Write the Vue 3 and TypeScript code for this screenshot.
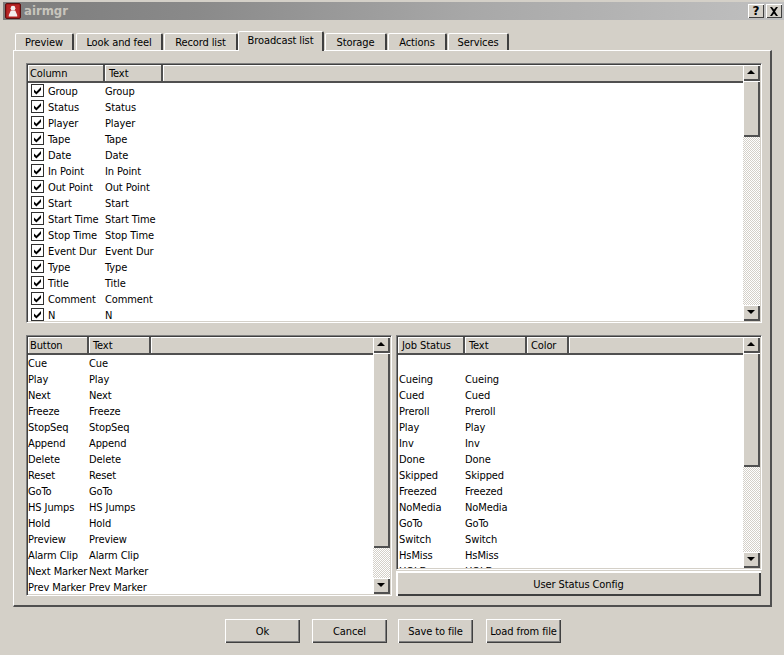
<script setup lang="ts">
const tabs = ['Preview', 'Look and feel', 'Record list', 'Broadcast list', 'Storage', 'Actions', 'Services']
const tabWidths = [59, 87, 74, 86, 62, 59, 61]
const columns = ['Group', 'Status', 'Player', 'Tape', 'Date', 'In Point', 'Out Point', 'Start', 'Start Time', 'Stop Time', 'Event Dur', 'Type', 'Title', 'Comment', 'N']
const buttons = ['Cue', 'Play', 'Next', 'Freeze', 'StopSeq', 'Append', 'Delete', 'Reset', 'GoTo', 'HS Jumps', 'Hold', 'Preview', 'Alarm Clip', 'Next Marker', 'Prev Marker']
const statuses = ['', 'Cueing', 'Cued', 'Preroll', 'Play', 'Inv', 'Done', 'Skipped', 'Freezed', 'NoMedia', 'GoTo', 'Switch', 'HsMiss', 'HOLD']
const actions = ['Ok', 'Cancel', 'Save to file', 'Load from file']
</script>

<template>
  <div class="window">
    <header class="titlebar">
      <svg class="app-icon" viewBox="0 0 16 16" width="16" height="16">
        <rect x="0.5" y="0.5" width="15" height="15" rx="1.5" fill="#a81c1c" stroke="#5c1010" />
        <rect x="2" y="2" width="12" height="12" fill="#b82626" />
        <circle cx="8" cy="5.2" r="2.4" fill="#f4eeee" />
        <path d="M5.8 7.5h4.4l2 4.5v1.5H3.8V12z" fill="#f4eeee" />
      </svg>
      <span class="title">airmgr</span>
      <span class="spacer"></span>
      <button class="cap help">?</button>
      <button class="cap close">
        <svg viewBox="0 0 10 9" width="10" height="9"><path d="M1 0h2l2 2.5L7 0h2L6 4.5 9 9H7L5 6.5 3 9H1l3-4.5z" fill="#000" /></svg>
      </button>
    </header>

    <nav class="tabs">
      <div
        v-for="(tab, i) in tabs"
        :key="tab"
        class="tab"
        :class="{ active: i === 3 }"
        :style="{ width: tabWidths[i] + 'px' }"
      >{{ tab }}</div>
    </nav>

    <main class="panel">
      <section class="list top-list">
        <div class="list-main">
          <div class="head">
            <div class="hcell w76">Column</div>
            <div class="hcell w58">Text</div>
            <div class="hcell fill"></div>
          </div>
          <div v-for="c in columns" :key="c" class="row check-row">
            <span class="check">
              <svg viewBox="0 0 9 9" width="9" height="9"><path d="M1 3.4l2.4 2.4L8 1v3L3.4 8.6 1 6.2z" fill="#000" /></svg>
            </span>
            <span>{{ c }}</span>
            <span>{{ c }}</span>
          </div>
        </div>
        <div class="scroll">
          <div class="sbtn"><i class="up"></i></div>
          <div class="thumb t56"></div>
          <div class="track"></div>
          <div class="sbtn"><i class="down"></i></div>
        </div>
      </section>

      <div class="lower">
        <section class="list left-list">
          <div class="list-main">
            <div class="head">
              <div class="hcell w61">Button</div>
              <div class="hcell w62">Text</div>
              <div class="hcell fill"></div>
            </div>
            <div v-for="b in buttons" :key="b" class="row plain-left">
              <span>{{ b }}</span>
              <span>{{ b }}</span>
            </div>
          </div>
          <div class="scroll">
            <div class="sbtn"><i class="up"></i></div>
            <div class="thumb t195"></div>
            <div class="track"></div>
            <div class="sbtn"><i class="down"></i></div>
          </div>
        </section>

        <div class="right-col">
          <section class="list right-list">
            <div class="list-main">
              <div class="head">
                <div class="hcell w67">Job Status</div>
                <div class="hcell w62">Text</div>
                <div class="hcell w42">Color</div>
                <div class="hcell fill"></div>
              </div>
              <div v-for="(s, i) in statuses" :key="i" class="row plain-right">
                <span>{{ s }}</span>
                <span>{{ s }}</span>
              </div>
            </div>
            <div class="scroll">
              <div class="sbtn"><i class="up"></i></div>
              <div class="thumb t114"></div>
              <div class="track"></div>
              <div class="sbtn"><i class="down"></i></div>
            </div>
          </section>
          <button class="btn status-btn">User Status Config</button>
        </div>
      </div>
    </main>

    <footer class="actions">
      <button v-for="a in actions" :key="a" class="btn action">{{ a }}</button>
    </footer>
  </div>
</template>

<style scoped>
.window {
  width: 784px;
  height: 655px;
  box-sizing: border-box;
  padding-top: 2px;
  overflow: hidden;
  background: #d4d0c8;
  color: #000;
  font-family: "DejaVu Sans", "Liberation Sans", sans-serif;
  font-stretch: condensed;
  font-size: 11px;
  letter-spacing: -0.1px;
  line-height: 16px;
}
.titlebar {
  height: 18px;
  margin-left: 3px;
  padding: 0 2px;
  display: flex;
  align-items: center;
  background: linear-gradient(90deg, #7c7c7c 0%, #8a8a8a 25%, #a8a8a8 60%, #c0c0c0 100%);
}
.app-icon { flex: none; margin-right: 3px; }
.title {
  font-weight: 700;
  font-size: 13px;
  letter-spacing: 0;
  color: #c8c5bd;
}
.spacer { flex: 1; }
.cap {
  width: 16px;
  height: 14px;
  padding: 0;
  display: flex;
  align-items: center;
  justify-content: center;
  font: 700 12px/14px "DejaVu Sans", sans-serif;
  color: #000;
  background: #d4d0c8;
  border: 0;
  box-shadow: inset 1px 1px 0 #fff, inset -1px -1px 0 #404040;
}
.help { margin-right: 2px; }

.tabs {
  height: 19px;
  margin: 11px 0 0 15px;
  display: flex;
  align-items: flex-end;
  gap: 1px;
}
.tab {
  box-sizing: border-box;
  height: 17px;
  border: 1px solid #d4d0c8;
  border-top-color: #fff;
  border-left-color: #fff;
  border-right: 2px solid #404040;
  border-bottom: 0;
  border-radius: 2px 2px 0 0;
  text-align: center;
  line-height: 17px;
}
.tab:nth-child(1) { margin-right: 1px; }
.tab:nth-child(3) { margin-right: -1px; }
.tab.active {
  position: relative;
  z-index: 1;
  height: 20px;
  margin-bottom: -1px;
  background: #d4d0c8;
  line-height: 17px;
}

.panel {
  box-sizing: border-box;
  width: 759px;
  height: 557px;
  margin-left: 13px;
  padding: 12px 8px 12px 12px;
  display: flex;
  flex-direction: column;
  gap: 12px;
  border: 1px solid #fff;
  border-right: 2px solid #505050;
  border-bottom: 2px solid #505050;
}
.list {
  box-sizing: border-box;
  display: flex;
  padding: 1px;
  overflow: hidden;
  background: #d4d0c8;
  border: 1px solid;
  border-color: #808080 #fff #fff #808080;
  box-shadow: inset 1px 1px 0 #404040;
}
.top-list { height: 260px; flex: none; }
.lower { display: flex; gap: 4px; height: 261px; }
.left-list { width: 366px; flex: none; height: 261px; }
.right-col { width: 366px; flex: none; display: flex; flex-direction: column; gap: 1px; }
.right-list { height: 235px; flex: none; }
.list-main { flex: 1; min-width: 0; overflow: hidden; background: #fff; }
.head { display: flex; height: 18px; }
.hcell {
  box-sizing: border-box;
  height: 18px;
  padding-left: 3px;
  line-height: 18px;
  background: #d4d0c8;
  border-right: 2px solid #505050;
  border-bottom: 2px solid #505050;
  box-shadow: inset 1px 1px 0 #fff;
  white-space: nowrap;
  flex: none;
}
.w76 { width: 77px; padding-left: 2px; }
.w58 { width: 58px; padding-left: 4px; }
.w61 { width: 61px; padding-left: 2px; }
.w62 { width: 62px; padding-left: 4px; }
.w67 { width: 67px; padding-left: 4px; }
.w42 { width: 42px; padding-left: 4px; }
.fill { flex: 1; border-right: 0; }
.row {
  height: 16px;
  display: grid;
  align-items: start;
  line-height: 18px;
  white-space: nowrap;
}
.check-row { grid-template-columns: 20px 57px 1fr; }
.check {
  box-sizing: border-box;
  width: 13px;
  height: 13px;
  margin: 1px 0 0 3px;
  display: flex;
  align-items: center;
  justify-content: center;
  background: #fff;
  border: 1px solid #303030;
}
.plain-left { grid-template-columns: 61px 1fr; }
.plain-right { grid-template-columns: 66px 1fr; padding-left: 1px; }

.scroll { width: 17px; flex: none; display: flex; flex-direction: column; }
.sbtn {
  box-sizing: border-box;
  height: 16px;
  display: flex;
  align-items: center;
  justify-content: center;
  background: #d4d0c8;
  box-shadow: inset 1px 1px 0 #fff, inset -2px -2px 0 #505050;
  flex: none;
}
.up, .down {
  width: 0;
  height: 0;
  margin: -2px 0 0 -1px;
  border-left: 4px solid transparent;
  border-right: 4px solid transparent;
}
.up { border-bottom: 4px solid #000; }
.down { border-top: 4px solid #000; }
.thumb {
  background: #d4d0c8;
  box-shadow: inset 1px 1px 0 #fff, inset -2px -2px 0 #505050;
  flex: none;
}
.t56 { height: 56px; }
.t195 { height: 195px; }
.t114 { height: 114px; }
.track {
  flex: 1;
  background-color: #d4d0c8;
  background-image: repeating-conic-gradient(#fff 0 25%, #d4d0c8 0 50%);
  background-size: 2px 2px;
}

.btn {
  box-sizing: border-box;
  padding: 2px 0 0;
  font: inherit;
  font-stretch: condensed;
  letter-spacing: -0.1px;
  color: #000;
  background: #d4d0c8;
  border: 0;
  box-shadow: inset 1px 1px 0 #fff, inset -1px -1px 0 #404040, inset -2px -2px 0 #808080;
}
.status-btn {
  height: 25px;
  margin-right: 1px;
  box-shadow: inset 2px 2px 0 #fff, inset -2px -2px 0 #404040;
}
.actions {
  height: 24px;
  margin: 12px 0 0 225px;
  display: flex;
  gap: 12px;
}
.action { width: 75px; height: 24px; }
.action:nth-child(3) { margin-left: -1px; margin-right: 1px; }
</style>

<style>
html, body { margin: 0; background: #d4d0c8; }
</style>
